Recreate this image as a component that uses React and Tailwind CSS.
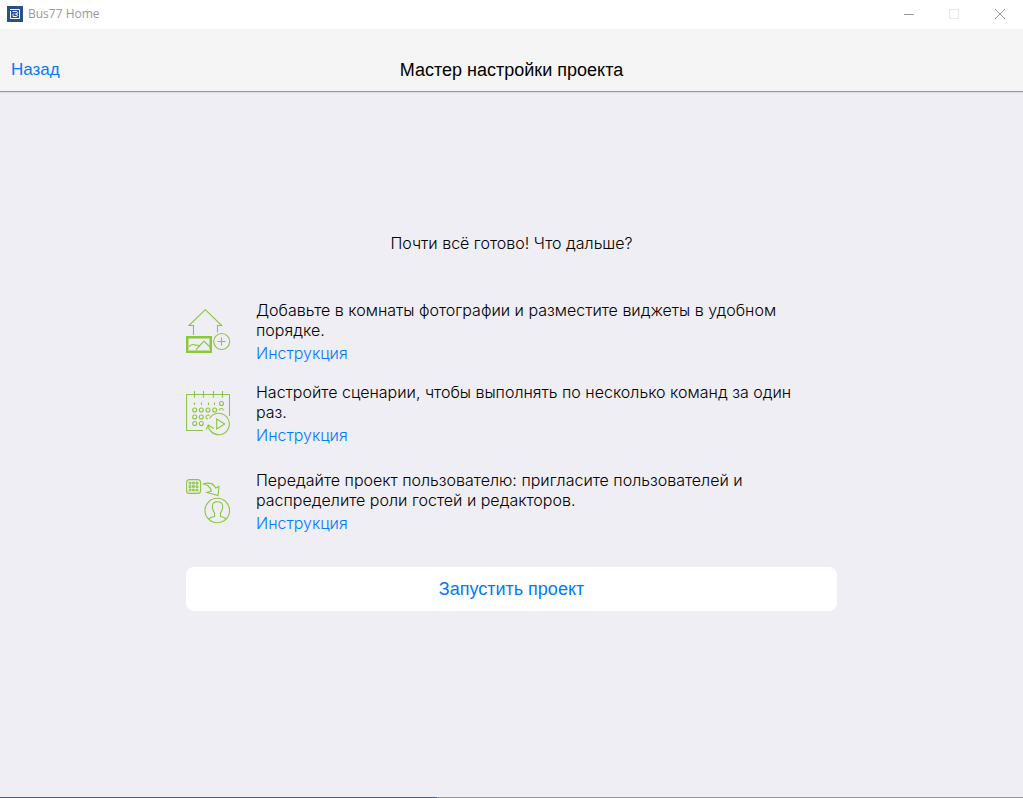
function AppLogo() {
  return (
    <svg width="16" height="16" viewBox="0 0 16 16" fill="none" aria-hidden="true">
      <rect width="16" height="16" fill="#27508f" />
      <path d="M3.5 5v7.5h9v-9H3" stroke="#fff" />
      <path d="M5.500 5.500H9q1.500 0 1.500 1.200T9 8H7.500M9 8q1.500 0 1.500 1.200T9 10.500H6V7.500" stroke="#fff" strokeWidth="0.900" />
    </svg>
  );
}

function PhotosIcon() {
  return (
    <svg className="shrink-0" width="45" height="45" viewBox="1 1 45 45" fill="none" stroke="#8cc63f" strokeWidth="1.100" aria-hidden="true">
      <path d="M8.500 27V17.500H4L20.300 1.700L36.700 17.500H32.500V24.500" />
      <rect x="2" y="29" width="24" height="15" strokeWidth="2" />
      <rect x="3.500" y="30.500" width="21" height="12" strokeWidth="0.500" />
      <path d="M4 38.500q4-3.500 6.500-1q2-1.500 4.500 1.500M11 41.500l8-8.500l6 6" />
      <circle cx="36.700" cy="33.500" r="8" />
      <path d="M36.500 29.500v8M32.500 33.500h8" />
    </svg>
  );
}

function ScenariosIcon() {
  return (
    <svg className="shrink-0" width="45" height="45" viewBox="1 1 45 45" fill="none" stroke="#8cc63f" strokeWidth="1.100" aria-hidden="true">
      <path d="M18 40.500H1.600V4.500H44.500V26" />
      <path d="M9.500 1v6.500M18.500 1v6.500M28.500 1v6.500M37.500 1v6.500" />
      <path d="M9.500 12.500v2.500M16.500 12.500v2.500M23.500 12.500v2.500M29.500 12.500v2.500" />
      <circle cx="36.500" cy="13.500" r="2" />
      <circle cx="9.700" cy="20" r="2" />
      <circle cx="16.300" cy="20" r="2" />
      <circle cx="23" cy="20" r="2" />
      <circle cx="29.700" cy="20" r="2" />
      <path d="M34.300 20.500a2 2 0 0 1 4 0" />
      <circle cx="9.700" cy="27" r="2" />
      <circle cx="16.300" cy="27" r="2" />
      <path d="M23 29a2 2 0 1 1 1.500-3.300" />
      <circle cx="9.700" cy="33.500" r="2" />
      <circle cx="16.300" cy="33.500" r="2" />
      <path d="M24.500 28.500A10.700 10.700 0 1 1 26 41.500Q23.300 39 23.300 35" />
      <path d="M21.300 39.500l2-4.500l5.500 3.500" />
      <path d="M31.700 29v10l8-5z" />
    </svg>
  );
}

function ShareIcon() {
  return (
    <svg className="shrink-0" width="45" height="45" viewBox="1 1 45 45" fill="none" stroke="#8cc63f" strokeWidth="1.100" aria-hidden="true">
      <rect x="1.600" y="1.600" width="14" height="13.800" rx="3" />
      <circle cx="5" cy="5" r="1" />
      <circle cx="8.500" cy="5" r="1" />
      <circle cx="12" cy="5" r="1" />
      <circle cx="5" cy="8.500" r="1" />
      <circle cx="8.500" cy="8.500" r="1" />
      <circle cx="12" cy="8.500" r="1" />
      <circle cx="5" cy="12" r="1" />
      <circle cx="8.500" cy="12" r="1" />
      <circle cx="12" cy="12" r="1" />
      <path d="M17.700 6Q27.500 3 30.700 10L34 8.500L33 17.500L22 14.500L26.500 13Q24.500 6.500 17.700 6Z" />
      <circle cx="32.300" cy="32.500" r="12.300" />
      <path d="M23.500 41.200q2-2 6-2.700v-3.500q-2.200-3-2.200-6.500q0-4.700 5.200-4.700t5.200 4.700q0 3.500-2.200 6.500v3.500q4 .7 6 2.700" />
    </svg>
  );
}

const steps = [
  {
    icon: PhotosIcon,
    text: "Добавьте в комнаты фотографии и разместите виджеты в удобном порядке.",
    spacing: "mt-[47px]",
  },
  {
    icon: ScenariosIcon,
    text: "Настройте сценарии, чтобы выполнять по несколько команд за один раз.",
    spacing: "mt-[19px]",
  },
  {
    icon: ShareIcon,
    text: "Передайте проект пользователю: пригласите пользователей и распределите роли гостей и редакторов.",
    spacing: "mt-[25px]",
  },
];

export default function App() {
  return (
    <div className="flex min-h-screen flex-col bg-[#efeef4] font-['Liberation_Sans',sans-serif] text-base text-black">
      <div className="flex h-[29px] items-center bg-white pl-[7px] pb-[2px]">
        <AppLogo />
        <span className="ml-[5px] font-['Open_Sans',sans-serif] text-xs text-[#999999]">Bus77 Home</span>
        <div className="ml-auto flex h-full text-[#999999]">
          <button type="button" aria-label="Свернуть" className="flex w-11 items-center justify-center">
            <svg width="10" height="10" viewBox="0 0 10 10" stroke="currentColor">
              <path d="M0 5.500h10" />
            </svg>
          </button>
          <button type="button" aria-label="Развернуть" disabled className="flex w-[46px] items-center justify-center text-[#e8e8e8]">
            <svg width="10" height="10" viewBox="0 0 10 10" fill="none" stroke="currentColor">
              <path d="M.5 .5h9v9h-9z" />
            </svg>
          </button>
          <button type="button" aria-label="Закрыть" className="flex w-[46px] items-center justify-center">
            <svg width="10" height="10" viewBox="0 0 10 10" stroke="currentColor">
              <path d="M0 0L10 10M10 0L0 10" />
            </svg>
          </button>
        </div>
      </div>

      <header className="grid h-[63px] grid-cols-[1fr_auto_1fr] items-end border-b border-[#999999] bg-[#f5f5f5] px-[11px] pb-[11px] shadow-[0_1px_0_#dcdce0]">
        <button type="button" className="justify-self-start text-[17px] leading-5 text-[#007aff]">
          Назад
        </button>
        <h1 className="text-lg leading-5">Мастер настройки проекта</h1>
      </header>

      <main className="mx-auto w-full max-w-[651px] grow pt-[141px]">
        <h2 className="text-center font-[Inter,sans-serif] leading-5 font-light">Почти всё готово! Что дальше?</h2>
        {steps.map(({ icon: Icon, text, spacing }) => (
          <section key={text} className={`flex items-center gap-[25px] ${spacing}`}>
            <Icon />
            <div className="max-w-[550px] font-[Inter,sans-serif] font-light">
              <p className="leading-5">{text}</p>
              <a href="#" className="mt-[3px] block w-fit leading-5 text-[#007aff]">
                Инструкция
              </a>
            </div>
          </section>
        ))}
        <button type="button" className="mt-[34px] h-11 w-full rounded-lg bg-white text-lg text-[#007aff]">
          Запустить проект
        </button>
      </main>

      <footer className="flex h-px bg-[#999999]">
        <div className="w-[42.7%] bg-[#4a5a78]" />
      </footer>
    </div>
  );
}
